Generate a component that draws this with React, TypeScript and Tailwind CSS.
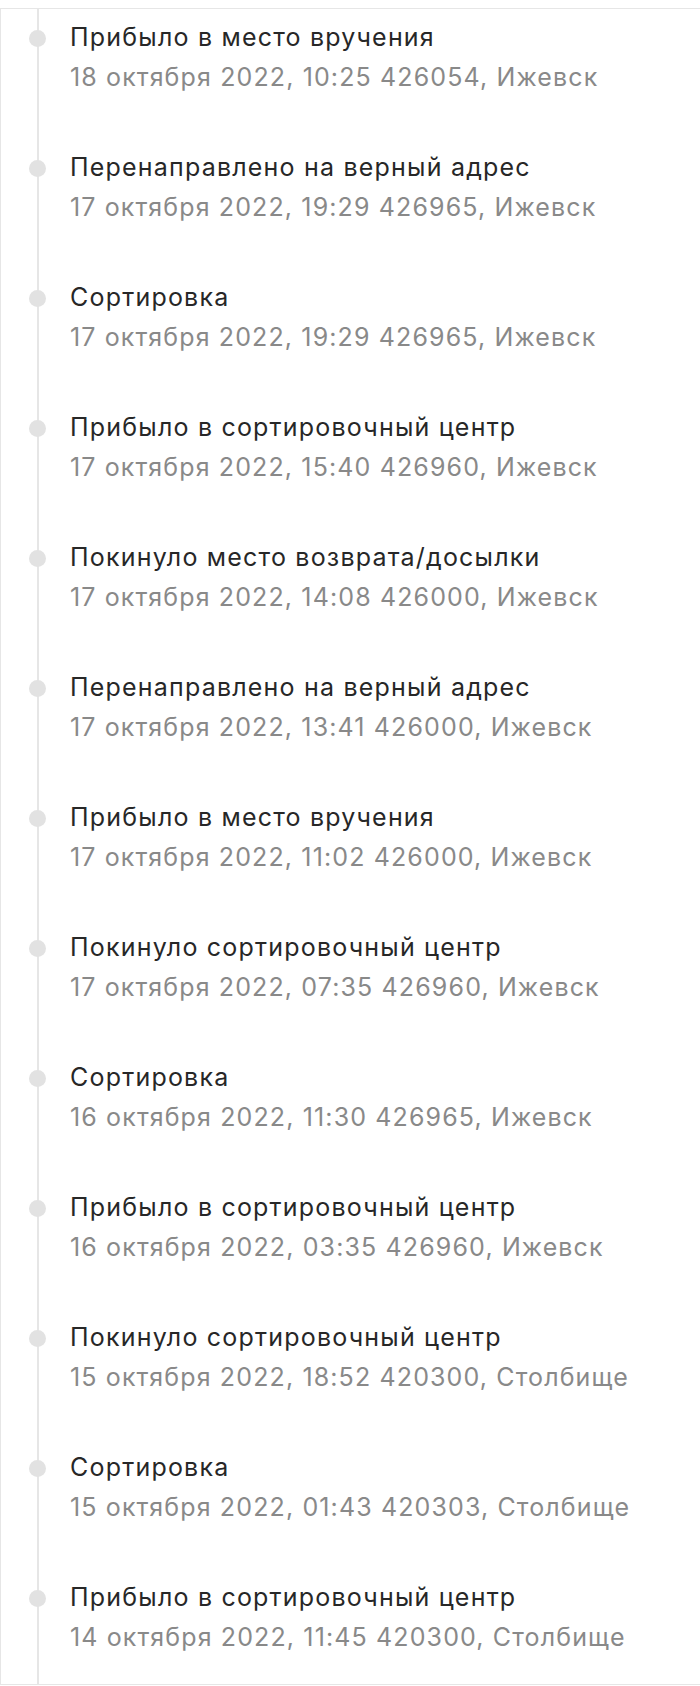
const events: { title: string; meta: string }[] = [
  { title: "Прибыло в место вручения", meta: "18 октября 2022, 10:25 426054, Ижевск" },
  { title: "Перенаправлено на верный адрес", meta: "17 октября 2022, 19:29 426965, Ижевск" },
  { title: "Сортировка", meta: "17 октября 2022, 19:29 426965, Ижевск" },
  { title: "Прибыло в сортировочный центр", meta: "17 октября 2022, 15:40 426960, Ижевск" },
  { title: "Покинуло место возврата/досылки", meta: "17 октября 2022, 14:08 426000, Ижевск" },
  { title: "Перенаправлено на верный адрес", meta: "17 октября 2022, 13:41 426000, Ижевск" },
  { title: "Прибыло в место вручения", meta: "17 октября 2022, 11:02 426000, Ижевск" },
  { title: "Покинуло сортировочный центр", meta: "17 октября 2022, 07:35 426960, Ижевск" },
  { title: "Сортировка", meta: "16 октября 2022, 11:30 426965, Ижевск" },
  { title: "Прибыло в сортировочный центр", meta: "16 октября 2022, 03:35 426960, Ижевск" },
  { title: "Покинуло сортировочный центр", meta: "15 октября 2022, 18:52 420300, Столбище" },
  { title: "Сортировка", meta: "15 октября 2022, 01:43 420303, Столбище" },
  { title: "Прибыло в сортировочный центр", meta: "14 октября 2022, 11:45 420300, Столбище" },
];

export default function App() {
  return (
    <div className="w-[700px] bg-white pt-2" style={{ fontFamily: "Inter, 'Noto Sans', sans-serif" }}>
      <div className="border-t border-l border-b border-[#e6e6e6]">
        <div className="ml-[36px] border-l-2 border-[#e6e6e6] pl-[31px] pt-2 pb-[27px] flex flex-col gap-[50px]">
          {events.map((e, i) => (
            <div key={i} className="relative">
              <span className="absolute left-[-41px] top-[13px] w-[17px] h-[17px] rounded-full bg-[#e2e2e2]" />
              <div className="text-[25px] leading-[40px] tracking-[1.2px] text-[#272727]">{e.title}</div>
              <div className="text-[25px] leading-[40px] tracking-[1.13px] text-[#898989]">{e.meta}</div>
            </div>
          ))}
        </div>
      </div>
    </div>
  );
}
